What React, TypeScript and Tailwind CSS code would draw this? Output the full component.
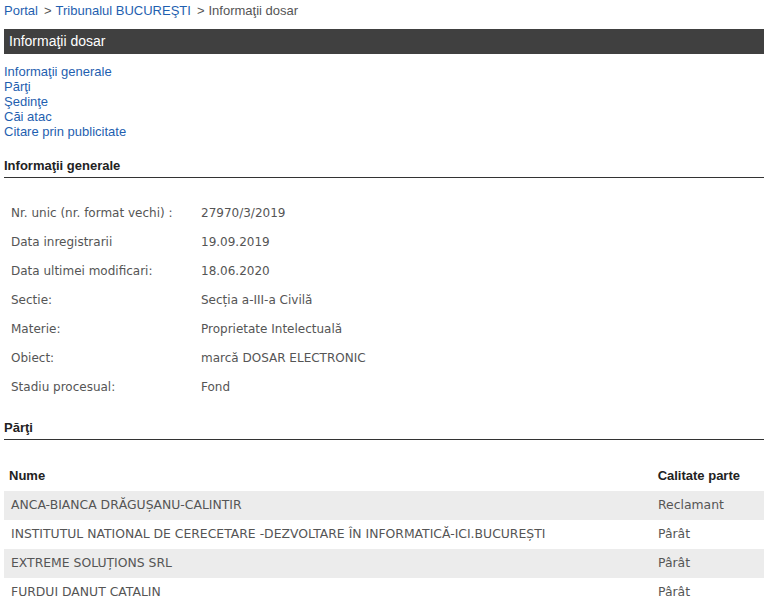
const generalInfo = [
  { label: "Nr. unic (nr. format vechi) :", value: "27970/3/2019" },
  { label: "Data inregistrarii", value: "19.09.2019" },
  { label: "Data ultimei modificari:", value: "18.06.2020" },
  { label: "Sectie:", value: "Secția a-III-a Civilă" },
  { label: "Materie:", value: "Proprietate Intelectuală" },
  { label: "Obiect:", value: "marcă DOSAR ELECTRONIC" },
  { label: "Stadiu procesual:", value: "Fond" },
];

const parti = [
  { nume: "ANCA-BIANCA DRĂGUȘANU-CALINTIR", calitate: "Reclamant" },
  { nume: "INSTITUTUL NATIONAL DE CERECETARE -DEZVOLTARE ÎN INFORMATICĂ-ICI.BUCUREȘTI", calitate: "Pârât" },
  { nume: "EXTREME SOLUȚIONS SRL", calitate: "Pârât" },
  { nume: "FURDUI DANUT CATALIN", calitate: "Pârât" },
];

const navLinks = ["Informaţii generale", "Părţi", "Şedinţe", "Căi atac", "Citare prin publicitate"];

export default function App() {
  return (
    <div className="min-h-[609px] bg-white pl-[4px] pr-[3px] font-['Liberation_Sans',Arial,sans-serif]">
      {/* Breadcrumb */}
      <div className="flex h-[22px] items-center text-[13px] text-[#555]">
        <a className="text-[#1f5fb0]">Portal</a>
        <span className="ml-[6px] mr-[4px]">&gt;</span>
        <a className="text-[#1f5fb0]">Tribunalul BUCUREŞTI</a>
        <span className="ml-[6px] mr-[4px]">&gt;</span>
        <span>Informaţii dosar</span>
      </div>

      {/* Title bar */}
      <div className="mt-[7px] flex h-[25px] items-center bg-[#404040] px-[5px] text-[14px] text-white">
        Informaţii dosar
      </div>

      {/* Section links */}
      <div className="mt-[10px] flex flex-col text-[13px] leading-[15px] text-[#1f5fb0]">
        {navLinks.map((l) => (
          <a key={l}>{l}</a>
        ))}
      </div>

      {/* Informatii generale */}
      <h2 className="mt-[19px] border-b border-[#333] pb-[4px] text-[13px] font-bold leading-[15px] text-[#222]">
        Informaţii generale
      </h2>
      <div className="mt-[28px] grid grid-cols-[190px_1fr] gap-y-[14px] pl-[7px] font-['DejaVu_Sans',Verdana,sans-serif] text-[12px] leading-[15px] text-[#555]">
        {generalInfo.map((r) => (
          <div key={r.label} className="contents">
            <span>{r.label}</span>
            <span>{r.value}</span>
          </div>
        ))}
      </div>

      {/* Parti */}
      <h2 className="mt-[25px] border-b border-[#333] pb-[4px] text-[13px] font-bold leading-[15px] text-[#222]">
        Părţi
      </h2>
      <div className="mt-[21px] flex h-[29px] items-center pl-[5px] pr-[24px] text-[13px] font-bold text-[#222]">
        <span className="flex-1">Nume</span>
        <span>Calitate parte</span>
      </div>
      <div className="mt-[1px] flex flex-col font-['DejaVu_Sans',Verdana,sans-serif] text-[12.4px] text-[#555]">
        {parti.map((p, i) => (
          <div
            key={p.nume}
            className={`flex h-[29px] items-center pl-[7px] ${i % 2 === 0 ? "bg-[#ececec]" : "bg-white"}`}
          >
            <span className="flex-1">{p.nume}</span>
            <span className="w-[106px]">{p.calitate}</span>
          </div>
        ))}
      </div>
    </div>
  );
}
